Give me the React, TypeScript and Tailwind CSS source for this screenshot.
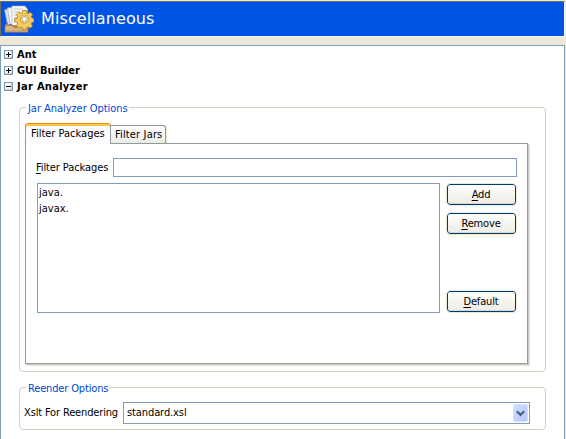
import type { ReactNode } from "react";

function TreeRow({ label, open, tracking }: { label: string; open?: boolean; tracking: string }) {
  return (
    <div className="flex h-4 items-start gap-1 pl-[3px]">
      <svg className="mt-[3px]" width="9" height="9" shapeRendering="crispEdges">
        <rect x="0.5" y="0.5" width="8" height="8" fill="#fcfbf9" stroke="#7898b5" />
        <path d="M1 7.5h7M7.5 1v7" stroke="#d2cdc0" />
        <path d="M2 4.5h5" stroke="#000" />
        {!open && <path d="M4.5 2v5" stroke="#000" />}
      </svg>
      <span className={`font-bold leading-4 ${tracking}`}>{label}</span>
    </div>
  );
}

function Group({ title, tracking, className, children }: { title: string; tracking: string; className: string; children: ReactNode }) {
  return (
    <section className={`ml-[18px] w-[527px] rounded-[4px] border border-[#d0d0bf] ${className}`}>
      <div className="-mt-[6px] flex h-[14px] pl-[6px]">
        <span className={`bg-white pl-[2px] pr-px leading-[14px] text-[#0046d5] ${tracking}`}>{title}</span>
      </div>
      {children}
    </section>
  );
}

function PushButton({ label }: { label: string }) {
  return (
    <button className="flex h-[21px] w-[69px] items-center justify-center rounded-[3px] border border-[#003c74] bg-linear-to-b from-white via-[#f4f4f0] to-[#eeede6] pr-px leading-[14px] tracking-[-0.15px] shadow-[inset_0_-1px_0_#d8d4c8] outline outline-[#ece9d8]">
      <span>
        <span className="underline underline-offset-2">{label[0]}</span>
        {label.slice(1)}
      </span>
    </button>
  );
}

function HeaderIcon() {
  return (
    <svg width="30" height="28" viewBox="0 0 30 28">
      <path d="M0.5 5l5-2 4 15-6 2z" fill="#dce1e8" stroke="#8d98a8" strokeWidth=".6" />
      <path d="M3.5 3l6-1 2 17H6z" fill="#f1f2f3" stroke="#a1a8b0" strokeWidth=".6" />
      <path d="M8 1h13l2.5 3v17H8z" fill="#f7f7f4" stroke="#b0b0aa" strokeWidth=".6" />
      <path d="M10 4h9M10 7h6M10 10h4M10 13h3M10 16h4" stroke="#c8cacc" />
      <path d="M1 20l3-3v3h18v-2l2 2v7H1z" fill="#b58d58" />
      <path d="M1 20.5h7l2 2h5l2-2h7v6.7H1z" fill="#d9b886" stroke="#997042" strokeWidth=".7" />
      <path d="M2 26h21" stroke="#bd965f" />
      <g transform="translate(20.5 13.5)">
        <path d="M-1.8-8h3.6l.5 2.4 1.4.6 2-1.4 2.5 2.5-1.4 2 .6 1.5 2.2.5v3.4l-2.2.5-.7 1.4 1.4 2-2.4 2.4-2-1.3-1.5.6-.4 2.2h-3.6l-.5-2.2-1.4-.6-2 1.3-2.5-2.4 1.4-2-.6-1.4-2.4-.5v-3.4l2.4-.5.6-1.5-1.4-2 2.5-2.5 2 1.4 1.4-.6z" fill="#f4cb5c" stroke="#a97820" strokeWidth=".8" />
        <circle cy=".7" r="4.3" fill="#ffe8a0" stroke="#d69e35" />
        <circle cy=".7" r="2.7" fill="#f8fafc" stroke="#a58548" strokeWidth=".8" />
      </g>
    </svg>
  );
}

export default function App() {
  return (
    <main className="h-[439px] w-[566px] overflow-hidden bg-[#ece9d8] pt-px font-['DejaVu_Sans_Condensed','DejaVu_Sans',sans-serif] text-[11px] whitespace-nowrap text-black [font-stretch:condensed]">
      <header className="flex h-9 w-[565px] items-center border-t border-r border-b border-l border-t-[#716f64] border-r-white border-b-white border-l-[#716f64] bg-[#0054e3] pl-[3px]">
        <HeaderIcon />
        <h1 className="ml-[7px] font-['DejaVu_Sans',sans-serif] text-[16px] leading-6 tracking-[0.1px] text-white [font-stretch:normal]">Miscellaneous</h1>
      </header>
      <div className="mt-2 h-[400px] w-[565px] border border-[#7f9db9] bg-white pt-px">
        <TreeRow label="Ant" tracking="tracking-normal" />
        <TreeRow label="GUI Builder" tracking="tracking-[-0.05px]" />
        <TreeRow label="Jar Analyzer" open tracking="tracking-[0.3px]" />
        <Group title="Jar Analyzer Options" tracking="tracking-[-0.05px]" className="mt-[12px] h-[265px]">
          <div className="mt-[7px] ml-[5px] flex h-[20px] items-end">
            <div className="relative z-10 -mb-px flex h-[21px] w-[86px] items-center rounded-t-[3px] border-t border-r border-l border-t-[#e68b2c] border-r-[#919b9c] border-l-[#919b9c] bg-[#fcfcfe] pl-[5px] shadow-[inset_0_2px_0_#ffc73c]">
              <span>Filter Packages</span>
            </div>
            <div className="flex h-[18px] w-[55px] items-center rounded-tr-[3px] border-t border-r border-[#919b9c] bg-linear-to-b from-white to-[#ecebe6] pt-[2px] pl-[4px] shadow-[1px_0_0_#ece9d8]">
              <span className="tracking-[0.15px]">Filter Jars</span>
            </div>
          </div>
          <div className="ml-[5px] h-[221px] w-[503px] border border-[#919b9c] bg-white pt-[14px] pl-[11px] shadow-[1px_1px_0_#d0cec4,2px_2px_0_#e5e2d5]">
            <div className="flex h-[19px] items-center">
              <label className="-ml-px w-[77px] pt-px tracking-[-0.1px]"><span className="underline underline-offset-2">F</span>ilter Packages</label>
              <input className="h-[19px] w-[404px] border border-[#7f9db9] bg-white outline-none" />
            </div>
            <div className="mt-[6px] flex">
              <ul className="h-[130px] w-[403px] border border-[#7f9db9] pt-px pl-px leading-4">
                <li>java.</li>
                <li>javax.</li>
              </ul>
              <div className="ml-[7px] flex flex-col pt-px">
                <PushButton label="Add" />
                <div className="mt-[8px]"><PushButton label="Remove" /></div>
                <div className="mt-[57px]"><PushButton label="Default" /></div>
              </div>
            </div>
          </div>
        </Group>
        <Group title="Reender Options" tracking="tracking-[-0.15px]" className="mt-[15px] h-[43px]">
          <div className="mt-[6px] flex h-[22px] items-center pl-[4px]">
            <label className="w-[99px] pt-px tracking-[-0.15px]">Xslt For Reendering</label>
            <div className="flex h-[22px] w-[407px] items-center justify-between border border-[#7f9db9] pr-px pl-[3px]">
              <span className="pt-px tracking-[-0.1px]">standard.xsl</span>
              <div className="flex h-[18px] w-[15px] items-center justify-center rounded-[2px] border border-[#d3dffc] bg-linear-to-br from-[#d0ddfd] to-[#b5c9f7]">
                <svg width="9" height="7" viewBox="0 0 9 7"><path d="M.8 1.2l3.7 3.7 3.7-3.7" fill="none" stroke="#4d6185" strokeWidth="2.2" /></svg>
              </div>
            </div>
          </div>
        </Group>
      </div>
    </main>
  );
}
